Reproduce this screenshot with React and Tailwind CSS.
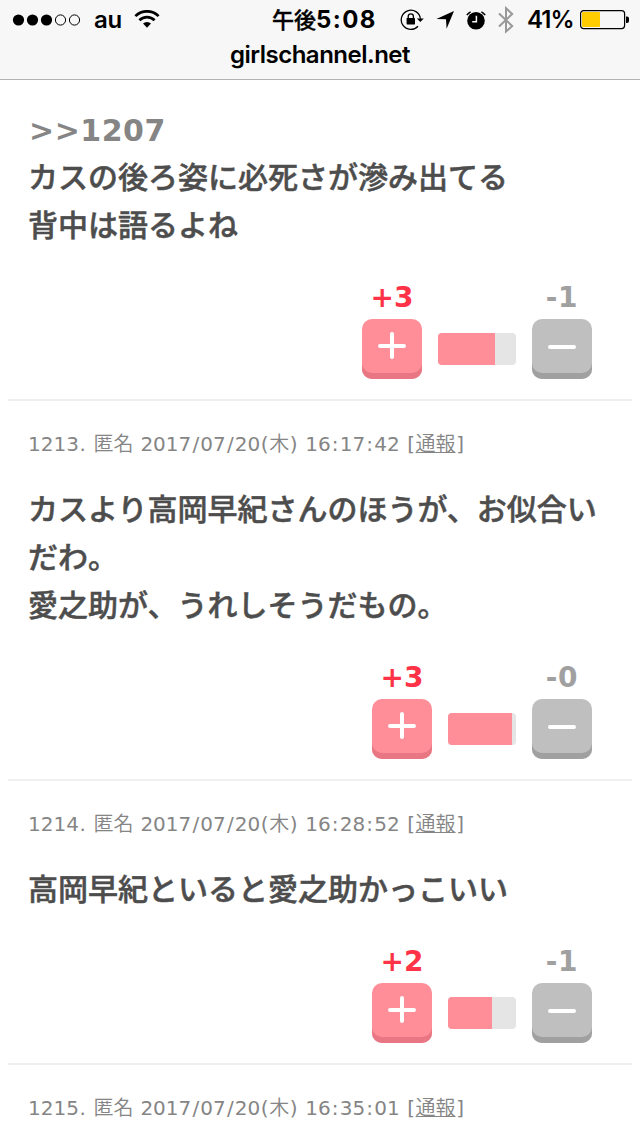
import React from 'react'

const posts = [
    {
        id: 1212,
        anchor: ">>1207",
        lines: ["カスの後ろ姿に必死さが滲み出てる", "背中は語るよね"],
        plus: 3,
        minus: 1,
        barWidth: 78,
        fillWidth: 57
    },
    {
        id: 1213,
        date: "2017/07/20(木) 16:17:42",
        lines: ["カスより高岡早紀さんのほうが、お似合いだわ。", "愛之助が、うれしそうだもの。"],
        plus: 3,
        minus: 0,
        barWidth: 68,
        fillWidth: 64
    },
    {
        id: 1214,
        date: "2017/07/20(木) 16:28:52",
        lines: ["高岡早紀といると愛之助かっこいい"],
        plus: 2,
        minus: 1,
        barWidth: 68,
        fillWidth: 44
    },
    {
        id: 1215,
        date: "2017/07/20(木) 16:35:01",
        lines: []
    }
]

const SignalDots = () => (
    <svg className='w-[70px] h-3 shrink-0' viewBox="0 0 70 12">
        {[0, 1, 2].map((i) => <circle key={i} cx={6.5 + i * 14} cy="6" r="5.6" fill="#000" />)}
        {[3, 4].map((i) => <circle key={i} cx={6.5 + i * 14} cy="6" r="5.1" fill="none" stroke="#000" />)}
    </svg>
)

const WifiIcon = () => (
    <svg className='w-[26px] h-[18px] shrink-0' viewBox="0 0 26 18" fill="none" stroke="#000" strokeWidth="2.7">
        <path d="M1.4 6.1a16.4 16.4 0 0 1 23.2 0" />
        <path d="M5.4 10.3a10.8 10.8 0 0 1 15.2 0" />
        <path d="M13 17.8l-4-4.3a5.8 5.8 0 0 1 8 0z" fill="#000" stroke="none" />
    </svg>
)

const RotationLockIcon = () => (
    <svg className='w-6 h-[22px] shrink-0' viewBox="0 0 24 22">
        <path d="M18 17.2A9.6 9.6 0 1 1 20.4 9.8" fill="none" stroke="#000" strokeWidth="1.3" />
        <path d="M16.8 9.5h7l-3.5 3.6z" />
        <rect x="6.6" y="9" width="8.4" height="6.4" rx="0.6" />
        <path d="M8.2 9.4V7.4a2.6 2.6 0 0 1 5.2 0v2" fill="none" stroke="#000" strokeWidth="1.3" />
    </svg>
)

const LocationIcon = () => (
    <svg className='w-[18px] h-[18px] shrink-0' viewBox="0 0 18 18">
        <path d="M18 0L10.6 17.8L10 8.3L0.4 7.9z" />
    </svg>
)

const AlarmIcon = () => (
    <svg className='w-5 h-[19px] shrink-0' viewBox="0 0 20 19">
        <circle cx="10" cy="9.8" r="8.8" />
        <path d="M10.4 4.8v5.9H6.2" fill="none" stroke="#f7f7f7" strokeWidth="1.5" />
        <path d="M0.8 4.2A10.8 10.8 0 0 1 4.6 0.8M15.4 0.8A10.8 10.8 0 0 1 19.2 4.2" fill="none" stroke="#000" strokeWidth="1.4" />
    </svg>
)

const BluetoothIcon = () => (
    <svg className='w-4 h-7 shrink-0' viewBox="0 0 16 28" fill="none" stroke="#999" strokeWidth="2">
        <path d="M1 7.5L14.2 20L8 25.6V2.2L14.2 8L1 20.5" />
    </svg>
)

const BatteryIcon = () => (
    <svg className='w-[50px] h-5 shrink-0' viewBox="0 0 50 20">
        <rect x="0.6" y="0.6" width="44" height="18" rx="3" fill="none" stroke="#000" strokeWidth="1.2" />
        <rect x="2" y="2.1" width="18" height="15" rx="1" fill="#ffcc00" />
        <path d="M46 6.4h1a2 2 0 0 1 2 2v2.5a2 2 0 0 1-2 2h-1z" />
    </svg>
)

const Header = () => (
    <header className="h-20 bg-[#f7f7f7] border-b border-[#b2b2b2] text-black font-['Inter','Noto_Sans_CJK_JP',sans-serif]">
        <div className='h-10 pl-3 flex items-center'>
            <SignalDots />
            <span className='w-[30px] ml-3 text-[24px] leading-10 font-semibold tracking-[-0.2px]'>au</span>
            <span className='ml-2.5 -mt-0.5'><WifiIcon /></span>
            <div className='w-[105px] ml-[112px] flex items-center leading-10 whitespace-nowrap'>
                <span className='text-[22px] font-medium [-webkit-text-stroke:0.4px_black]'>午後</span>
                <span className='text-[24px] font-bold tracking-[1.4px]'>5:08</span>
            </div>
            <span className='ml-[23px]'><RotationLockIcon /></span>
            <span className='ml-3'><LocationIcon /></span>
            <span className='ml-3'><AlarmIcon /></span>
            <span className='ml-3'><BluetoothIcon /></span>
            <span className='w-[52px] ml-[13px] mr-px text-[24px] leading-10 font-semibold tracking-[-0.9px]'>41%</span>
            <BatteryIcon />
        </div>
        <p className='text-center text-[24px] leading-[30px] font-semibold tracking-[-0.5px]'>girlschannel.net</p>
    </header>
)

// gives punctuation a little more room than the font does, kanji get a lighter weight
const Spaced = ({ text }) => (
    text.split(/([/:()[\].]|[\u4e00-\u9fff]+)/).map((part, i) => {
        if (part === "/" || part === ":") return <span key={i} className='mx-[1.15px]'>{part}</span>
        if (/^[()[\].]$/.test(part)) return <span key={i} className='mx-[0.6px]'>{part}</span>
        if (/^[\u4e00-\u9fff]+$/.test(part)) return <span key={i} className='font-[350]'>{part}</span>
        return part
    })
)

const PostMeta = ({ id, date }) => (
    <p className='pt-[23px] h-[85px] text-[20px] leading-10 [word-spacing:0.6px] text-[#858585]'>
        <Spaced text={`${id}. 匿名 ${date} [`} />
        <a className='font-[350] underline decoration-1 underline-offset-1'>通報</a>
        <Spaced text="]" />
    </p>
)

const VoteButton = ({ type, count }) => {
    const isPlus = type === 'plus'
    return (
        <div className='w-[60px] flex flex-col items-center'>
            <span className={`h-[43px] text-[28px] leading-[44px] font-bold whitespace-nowrap ${isPlus ? "text-[#ff3347]" : "text-[#a0a0a0] tracking-[0.8px]"}`}>
                {isPlus ? "+" : "-"}{count}
            </span>
            <button className={`w-[60px] h-[60px] rounded-[10px] ${isPlus ? "bg-[#ff8e99] shadow-[inset_0_-6px_0_#e97783]" : "bg-[#bfbfbf] shadow-[inset_0_-6px_0_#a0a0a0]"}`}>
                <svg className='w-full h-full' viewBox="0 0 60 60" stroke="#fff" strokeWidth="4" strokeLinecap="round">
                    {isPlus ? <path d="M18 27h24M30 15v23" /> : <path d="M18 28h24" />}
                </svg>
            </button>
        </div>
    )
}

const Post = ({ post }) => {
    return (
        <article className='mx-2 px-5 pb-5 border-b-2 border-[#efefef]'>
            {post.date ? (
                <PostMeta id={post.id} date={post.date} />
            ) : (
                <div className='h-[26px]' />
            )}
            <div className='text-[30px] leading-[48px] font-medium text-[#4d4d4d] [-webkit-text-stroke:0.5px_#4d4d4d]'>
                {post.anchor && <p className='h-12 pt-px pl-px font-bold tracking-[0.5px] text-[#858585] [-webkit-text-stroke:0px]'>{post.anchor}</p>}
                {post.lines.map((line) => <p key={line}>{line}</p>)}
            </div>
            {post.barWidth && (
                <div className='mt-[26px] pr-5 flex justify-end items-end gap-4'>
                    <VoteButton type="plus" count={post.plus} />
                    <div className='h-8 mb-3.5 rounded bg-[#e5e5e5] overflow-hidden' style={{ width: post.barWidth }}>
                        <div className='h-full bg-[#ff8e99]' style={{ width: post.fillWidth }} />
                    </div>
                    <VoteButton type="minus" count={post.minus} />
                </div>
            )}
        </article>
    )
}

const App = () => {
    return (
        <div className="h-[1136px] overflow-hidden bg-white font-['DejaVu_Sans','Noto_Sans_CJK_JP',sans-serif]">
            <Header />
            <main>
                {posts.map((post) => <Post key={post.id} post={post} />)}
            </main>
        </div>
    )
}

export default App
